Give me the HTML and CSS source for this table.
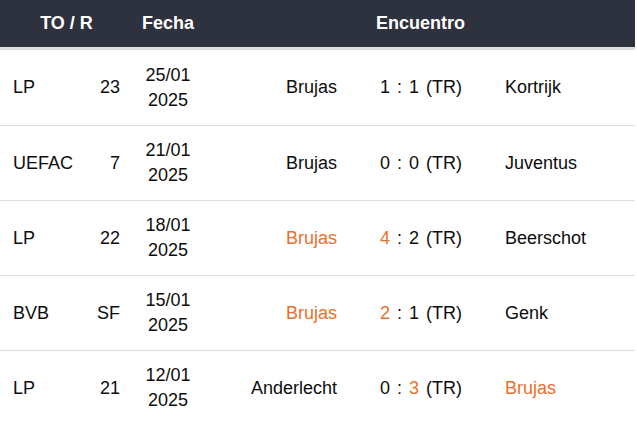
FILE: index.html
```html
<!DOCTYPE html>
<html lang="es">
<head>
<meta charset="utf-8">
<link rel="stylesheet" href="styles.css">
</head>
<body>
<div class="table">
  <div class="head">
    <div class="h-to">TO / R</div>
    <div class="h-date">Fecha</div>
    <div class="h-match">Encuentro</div>
  </div>
  <div class="row">
    <div class="comp">LP</div>
    <div class="round">23</div>
    <div class="date">25/01<br>2025</div>
    <div class="home">Brujas</div>
    <div class="score">1 : 1 <span class="tr">(TR)</span></div>
    <div class="away">Kortrijk</div>
  </div>
  <div class="row">
    <div class="comp">UEFAC</div>
    <div class="round">7</div>
    <div class="date">21/01<br>2025</div>
    <div class="home">Brujas</div>
    <div class="score">0 : 0 <span class="tr">(TR)</span></div>
    <div class="away">Juventus</div>
  </div>
  <div class="row">
    <div class="comp">LP</div>
    <div class="round">22</div>
    <div class="date">18/01<br>2025</div>
    <div class="home win">Brujas</div>
    <div class="score"><span class="win">4</span> : 2 <span class="tr">(TR)</span></div>
    <div class="away">Beerschot</div>
  </div>
  <div class="row">
    <div class="comp">BVB</div>
    <div class="round">SF</div>
    <div class="date">15/01<br>2025</div>
    <div class="home win">Brujas</div>
    <div class="score"><span class="win">2</span> : 1 <span class="tr">(TR)</span></div>
    <div class="away">Genk</div>
  </div>
  <div class="row last">
    <div class="comp">LP</div>
    <div class="round">21</div>
    <div class="date">12/01<br>2025</div>
    <div class="home">Anderlecht</div>
    <div class="score">0 : <span class="win">3</span> <span class="tr">(TR)</span></div>
    <div class="away win">Brujas</div>
  </div>
</div>
</body>
</html>
```

FILE: styles.css
```css
html, body {
  margin: 0;
  padding: 0;
  background: #fff;
}
body {
  font-family: "Liberation Sans", Arial, sans-serif;
  font-size: 18px;
  color: #0d0d0d;
}
.table {
  width: 635px;
}
.head {
  display: grid;
  grid-template-columns: 130px 76px 1fr;
  height: 47px;
  align-items: center;
  background: #2e323e;
  color: #fff;
  font-weight: bold;
  border-bottom: 3px solid #dedede;
}
.h-to, .h-date, .h-match {
  text-align: center;
}
.h-to { padding-left: 3px; }
.row {
  display: grid;
  grid-template-columns: 80px 50px 76px 141px 143px 1fr;
  height: 74px;
  align-items: center;
  border-bottom: 1px solid #dcdcdc;
}
.head + .row { height: 75px; }
.row.last { border-bottom: none; }
.comp { padding-left: 13px; }
.round { text-align: right; padding-right: 10px; }
.date { text-align: center; line-height: 25px; }
.home { text-align: right; padding-right: 10px; }
.score { padding-left: 33px; word-spacing: 2px; }
.tr { word-spacing: 0; }
.away { padding-left: 15px; }
.win { color: #e8702a; }
```
